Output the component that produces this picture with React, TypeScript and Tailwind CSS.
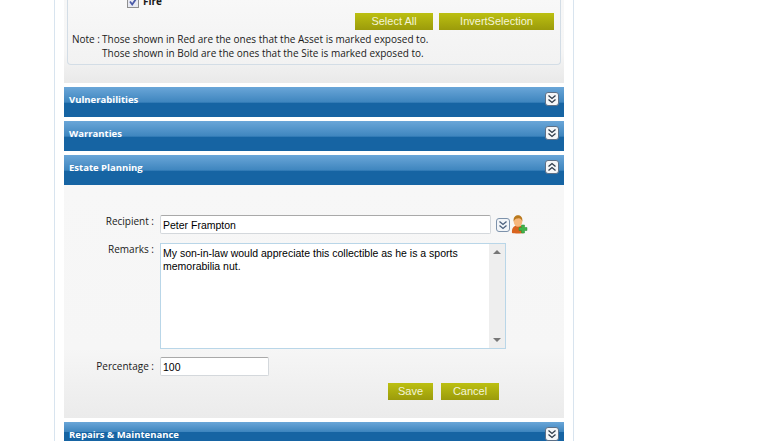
import { ReactNode } from 'react'

const labelFont = 'font-["Open_Sans","Noto_Sans",sans-serif] text-[10px] text-[#1a1a1a]'
const fieldFont = 'font-["Liberation_Sans",Arial,sans-serif] text-[10.5px] text-black'

function Chevrons({ up = false, soft = false }: { up?: boolean; soft?: boolean }) {
  return (
    <svg width="14" height="14" viewBox="0 0 14 14" className="block">
      <rect x="0.5" y="0.5" width="13" height="13" rx="2.5" fill={soft ? '#f2f5f8' : '#f4f6f8'} stroke={soft ? '#7d92ab' : '#5d7087'} />
      <g fill="none" stroke={soft ? '#4a5f7c' : '#2f3b4a'} strokeWidth="1.3" transform={up ? 'rotate(180 7 7)' : undefined}>
        <path d="M3.500 3.500 7 6.500l3.500-3" />
        <path d="M3.500 7.500 7 10.500l3.500-3" />
      </g>
    </svg>
  )
}

function OliveButton({ label, className }: { label: string; className: string }) {
  return (
    <button
      className={`h-[17px] bg-gradient-to-b from-[#bcc011] to-[#9b9b0b] font-["Liberation_Sans",Arial,sans-serif] text-[11px] leading-[17px] text-[#f4f4d8] ${className}`}
    >
      {label}
    </button>
  )
}

function SectionHeader({ title, open = false, cut = false }: { title: string; open?: boolean; cut?: boolean }) {
  return (
    <div
      className={`flex items-start justify-between bg-[linear-gradient(#6aa6d8_0%,#3f86bf_50%,#1664a3_55%,#1664a3_100%)] pl-[5px] pr-[5px] pt-[5px] ${cut ? 'h-[19px]' : 'h-[30px]'}`}
    >
      <span className='font-["Open_Sans","Noto_Sans",sans-serif] text-[9.5px] font-bold leading-[15px] text-white'>{title}</span>
      <Chevrons up={open} />
    </div>
  )
}

function FormRow({ label, children, top = 'pt-[3px]' }: { label: string; children: ReactNode; top?: string }) {
  return (
    <div className="flex items-start">
      <div className={`w-[90px] shrink-0 text-right leading-[12px] ${labelFont} ${top}`}>{label} :</div>
      <div className="ml-[6px]">{children}</div>
    </div>
  )
}

function Person() {
  return (
    <svg width="17" height="19" viewBox="0 0 17 19" className="block">
      <path d="M1 18c-.500-5 1.500-7.500 6-7.500s6.500 2.500 6 7.500c-2 .600-10 .600-12 0Z" fill="#d9641f" />
      <ellipse cx="7" cy="6.500" rx="4.300" ry="5.200" fill="#f6b77c" />
      <path d="M2.700 6.500C2 2 4.800.300 7 .300s5 1.700 4.300 6.200C10.500 3.800 8.500 3 7 3.500 5.500 3.500 3.500 4 2.700 6.500Z" fill="#b9791d" />
      <path d="M10.500 10h3v2.500H16v3h-2.500V18h-3v-2.500H8v-3h2.500Z" fill="#3fb54a" stroke="#2b8a35" strokeWidth="0.5" />
    </svg>
  )
}

function TickBox() {
  return (
    <svg width="12" height="12" viewBox="0 0 12 12" className="block shrink-0">
      <rect x="0.500" y="0.500" width="11" height="11" fill="#e8eaf2" stroke="#8f8f8f" />
      <path d="M3 5.500 5.200 8.500 9 3" fill="none" stroke="#4a5aa8" strokeWidth="1.800" />
    </svg>
  )
}

export default function App() {
  return (
    <div className="h-[441px] w-[779px] overflow-hidden bg-white">
      <div className="ml-[54px] h-full w-[520px] border-x border-[#d8e4ef] pl-[9px]">
        <div className="flex w-[500px] flex-col gap-[4px]">
          {/* asset panel, scrolled part way */}
          <div className="h-[83px] bg-[linear-gradient(#f7f7f7_0%,#f6f6f6_60%,#e9e9e9_100%)] px-[3px]">
            <div className="h-[65px] w-[494px] overflow-hidden rounded-b-[4px] border-x border-b border-[#d3dde6] bg-gradient-to-b from-[#f8f8f8] to-[#f2f2f2]">
              <div className="relative h-[65px]">
                <div className='absolute left-[59px] top-[-5px] flex items-center gap-[4px] font-["Open_Sans","Noto_Sans",sans-serif] text-[10px] font-bold leading-[13px] text-[#1a1a1a]'>
                  <TickBox />
                  Fire
                </div>
                <div className="flex justify-end gap-[6px] pr-[6px] pt-[13px]">
                  <OliveButton label="Select All" className="w-[78px]" />
                  <OliveButton label="InvertSelection" className="w-[115px]" />
                </div>
                <div className={`pl-[4px] pt-[2px] leading-[14px] ${labelFont}`}>
                  <div className="flex">
                    <span className="w-[30px]">Note :</span>
                    <span>Those shown in Red are the ones that the Asset is marked exposed to.</span>
                  </div>
                  <div className="pl-[30px]">Those shown in Bold are the ones that the Site is marked exposed to.</div>
                </div>
              </div>
            </div>
          </div>

          <SectionHeader title="Vulnerabilities" />
          <SectionHeader title="Warranties" />

          <div>
            <SectionHeader title="Estate Planning" open />
            <div className="h-[233px] bg-[linear-gradient(#f7f7f7_0%,#f6f6f6_70%,#ebebeb_100%)] pt-[30px]">
              <FormRow label="Recipient" top="pt-0">
                <div className="flex items-center">
                  <input
                    readOnly
                    value="Peter Frampton"
                    className={`block h-[19px] w-[331px] rounded-[2px] border border-[#d4d8dc] border-t-[#a9a9a9] bg-white px-[2px] ${fieldFont}`}
                  />
                  <div className="ml-[5px]">
                    <Chevrons soft />
                  </div>
                  <div className="ml-px">
                    <Person />
                  </div>
                </div>
              </FormRow>
              <div className="mt-[9px]">
                <FormRow label="Remarks" top="pt-0">
                  <div className="flex h-[106px] w-[346px] border border-[#b9d6e8] bg-white">
                    <textarea
                      readOnly
                      value="My son-in-law would appreciate this collectible as he is a sports memorabilia nut."
                      className={`h-full min-w-0 flex-1 resize-none overflow-hidden px-[2px] py-[3px] leading-[13px] outline-none ${fieldFont}`}
                    />
                    <div className="flex w-[16px] flex-col items-center justify-between bg-[#eeeeee] py-[6px]">
                      <div className="h-0 w-0 border-x-[4px] border-b-[4px] border-x-transparent border-b-[#777777]" />
                      <div className="h-0 w-0 border-x-[4px] border-t-[4px] border-x-transparent border-t-[#777777]" />
                    </div>
                  </div>
                </FormRow>
              </div>
              <div className="mt-[8px]">
                <FormRow label="Percentage">
                  <input
                    readOnly
                    value="100"
                    className={`block h-[19px] w-[109px] rounded-[2px] border border-[#d4d8dc] border-t-[#a9a9a9] bg-white px-[2px] ${fieldFont}`}
                  />
                </FormRow>
              </div>
              <div className="ml-[324px] mt-[7px] flex gap-[8px]">
                <OliveButton label="Save" className="w-[45px]" />
                <OliveButton label="Cancel" className="w-[58px]" />
              </div>
            </div>
          </div>

          <SectionHeader title="Repairs & Maintenance" cut />
        </div>
      </div>
    </div>
  )
}
